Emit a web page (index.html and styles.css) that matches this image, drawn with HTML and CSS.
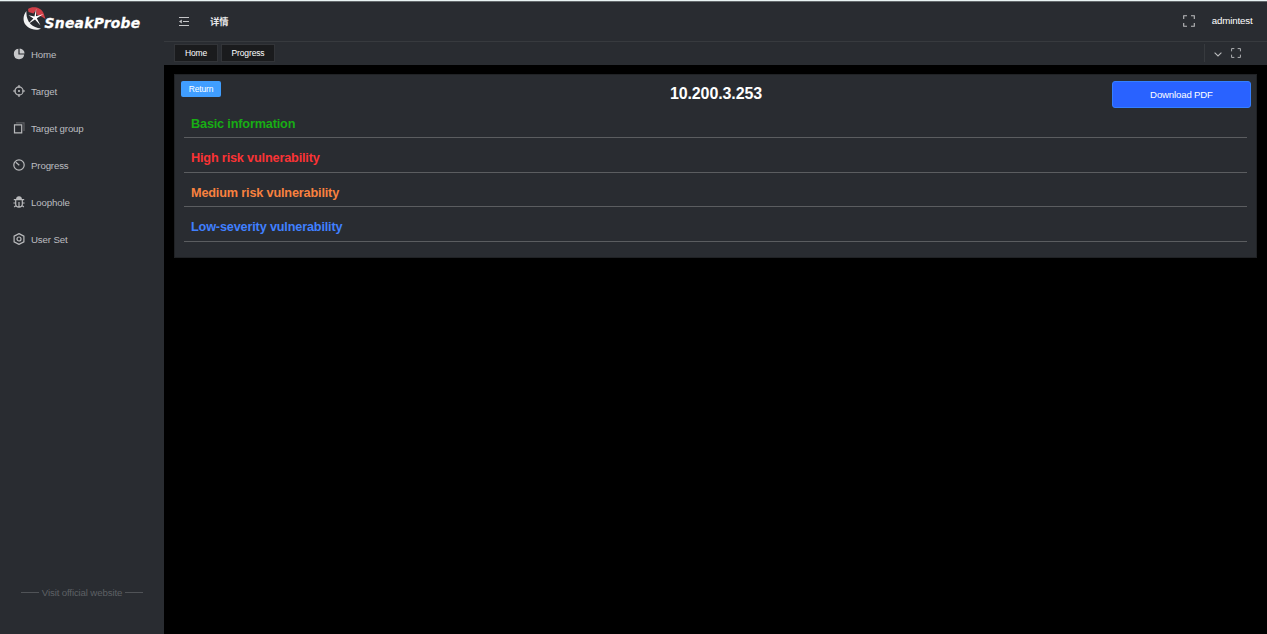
FILE: index.html
```html
<!DOCTYPE html>
<html lang="en">
<head>
<meta charset="utf-8">
<title>SneakProbe</title>
<link rel="stylesheet" href="styles.css">
</head>
<body>
<div class="app">
  <aside class="sidebar">
    <div class="logo">
      <svg width="120" height="26" viewBox="0 0 120 26">
        <path d="M5 3C9 -.2 18 .8 20.5 7L22.5 13L18.5 10.5L13.5 8.5L13 4L10.5 7.5L5.5 6Z" fill="#cf3f48"/>
        <path d="M3.5 5C-1.5 11 -.5 20 9 23C12 24.2 16 24 18 22.4C9 22 2.5 15 3.5 5Z" fill="#f2f3f3"/>
        <path d="M13.2 2.5L13 10.2L20.5 8L13.8 12.2L17.5 19.5L12 13.6L4.5 18.5L10.4 12.4L5.5 9.2L11.4 10.4Z" fill="#fff"/>
        <text class="wordmark" x="21.5" y="21.5" textLength="96" lengthAdjust="spacingAndGlyphs">SneakProbe</text>
      </svg>
    </div>
    <nav class="menu">
      <a class="item"><svg class="icon" viewBox="0 0 12 12"><path d="M5.4 .8A5.2 5.2 0 1 0 11.2 6.6H5.4Z" fill="#c7c8ca"/><path d="M6.6.4A5.2 5.2 0 0 1 11.6 5.4H6.6Z" fill="#c7c8ca"/></svg><span>Home</span></a>
      <a class="item"><svg class="icon line" viewBox="0 0 12 12"><circle cx="6" cy="6" r="4.1"/><path d="M6 0V3M6 9V12M0 6H3M9 6H12"/><circle cx="6" cy="6" r=".5"/></svg><span>Target</span></a>
      <a class="item"><svg class="icon line" viewBox="0 0 12 12"><path d="M3 .8H11V9" opacity=".35"/><path d="M1.5 2.8H8.7V10.9H1.5Z"/></svg><span>Target group</span></a>
      <a class="item"><svg class="icon line" viewBox="0 0 12 12"><circle cx="6" cy="6" r="5.2"/><path d="M2.8 3.2L6.3 6.2"/></svg><span>Progress</span></a>
      <a class="item"><svg class="icon line" viewBox="0 0 12 12"><path d="M3.7 3.2C3.7 0 8.3 0 8.3 3.2Z" fill="#b9babc"/><path d="M.8 3.7H11.2M2.7 4V8.6C2.7 12 9.3 12 9.3 8.6V4M6 6V11M.4 7H2.7M9.3 7H11.6M1.2 11L3.2 9.3M10.8 11L8.8 9.3"/></svg><span>Loophole</span></a>
      <a class="item"><svg class="icon line" viewBox="0 0 12 12"><path d="M6 .6L10.9 3.2V8.8L6 11.4L1.1 8.8V3.2Z"/><circle cx="6" cy="6" r="2"/></svg><span>User Set</span></a>
    </nav>
    <div class="visit"><span class="dash"></span>Visit official website<span class="dash"></span></div>
  </aside>
  <div class="main">
    <header class="topbar">
      <svg class="fold" width="10" height="9" viewBox="0 0 10 9"><path d="M0 .5H10M4 4.5H10M0 8.5H10" stroke="#c5c6c8"/><path d="M2.8 2.5V6.5L0 4.5Z" fill="#c5c6c8"/></svg>
      <span class="crumb">详情</span>
      <svg class="full" width="12" height="12" viewBox="0 0 12 12"><path d="M.7 4V.7H4M8 .7H11.3V4M11.3 8V11.3H8M4 11.3H.7V8"/></svg>
      <span class="user">admintest</span>
    </header>
    <div class="tabs">
      <a class="tab home">Home</a>
      <a class="tab progress">Progress</a>
      <div class="tools">
        <svg class="chevron" width="8" height="5" viewBox="0 0 8 5"><path d="M.6.7L4 4L7.4.7"/></svg>
        <svg class="expand" width="10" height="10" viewBox="0 0 12 12"><path d="M.7 4V.7H4M8 .7H11.3V4M11.3 8V11.3H8M4 11.3H.7V8"/></svg>
      </div>
    </div>
    <main class="panel">
      <div class="head">
        <button class="return">Return</button>
        <h1>10.200.3.253</h1>
        <button class="download">Download PDF</button>
      </div>
      <h2 class="basic">Basic information</h2>
      <h2 class="high">High risk vulnerability</h2>
      <h2 class="medium">Medium risk vulnerability</h2>
      <h2 class="low">Low-severity vulnerability</h2>
    </main>
  </div>
</div>
</body>
</html>
```
FILE: styles.css
```css
* { box-sizing: border-box; }
body { margin: 0; background: #000; font-family: "Liberation Sans", "Noto Sans CJK SC", sans-serif; font-size: 9.7px; letter-spacing: -.15px; overflow: hidden; }
.app { display: flex; height: 634px; border-top: 1px solid #e9f3f3; }
.sidebar { width: 164px; background: #292c31; display: flex; flex-direction: column; border-top: 1px solid #64696c; }
.logo { height: 33px; padding: 4px 0 0 23px; }
.logo svg { display: block; }
.wordmark { font: italic bold 13.5px "DejaVu Sans", sans-serif; letter-spacing: .3px; fill: #fff; stroke: #fff; stroke-width: .3px; }
.menu { display: flex; flex-direction: column; }
.item { display: flex; align-items: center; height: 37px; padding-left: 13px; gap: 6px; color: #bcbdc0; }
.item span { padding-top: 1px; }
.icon { width: 12px; height: 12px; }
.line { fill: none; stroke: #b9babc; stroke-width: 1.2; }
.visit { display: flex; align-items: center; justify-content: center; gap: 3px; margin-top: auto; padding-bottom: 36px; color: #5d6064; }
.dash { width: 18px; height: 1px; background: #505357; }
.main { flex: 1; display: flex; flex-direction: column; }
.topbar { height: 41px; display: flex; align-items: center; padding: 0 15px 2px 15px; background: #292c31; border-top: 1px solid #64696c; border-bottom: 1px solid #373a3e; color: #fff; }
.fold { margin-top: 1px; }
.crumb { margin-left: 21px; font-size: 9.33px; letter-spacing: 0; font-weight: bold; color: #e8e8e9; }
.full { margin-left: auto; }
.full, .expand, .chevron { fill: none; stroke: #babbbd; stroke-width: 1.1; }
.user { margin-left: 17px; margin-right: -.5px; padding-bottom: 1px; }
.tabs { display: flex; height: 23px; padding: 2px 0 3px 10px; gap: 3px; background: #292c31; color: #fff; font-size: 8.5px; }
.tab { display: flex; align-items: center; justify-content: center; height: 18px; padding-bottom: 1px; border: 1px solid #323438; background: #1a1b1d; }
.home { width: 44px; }
.progress { width: 54px; }
.tools { display: flex; align-items: center; gap: 9px; width: 63px; margin-left: auto; padding-left: 9px; border-left: 1px solid #373a3e; }
.chevron { margin-top: 3px; }
.panel { height: 184px; margin: 9px 10px 0; padding: 7px 10px 0; background: #292c31; border: 1px solid #202225; }
.head { display: flex; align-items: flex-start; justify-content: space-between; height: 31px; margin: -1px -4px 0; }
button { font-family: inherit; letter-spacing: inherit; color: #fff; padding: 0; }
.return { width: 40px; height: 16px; margin-right: 99px; border: 0; border-radius: 2px; background: #409eff; font-size: 8.5px; }
h1 { margin: 3px 0 0; font-size: 16px; letter-spacing: -.1px; line-height: 20px; color: #fff; }
.download { width: 139px; height: 27px; margin-right: -1px; border: 1px solid #347fff; border-radius: 3px; background: #2962ff; font-size: 9.6px; }
h2 { height: 34.67px; margin: 0 -1px; padding: 3px 7px 0; font-size: 12.7px; letter-spacing: -.17px; line-height: 18px; border-bottom: 1px solid #5b5d60; }
.basic { height: 26px; color: #18ad14; }
.high { color: #fa3335; padding-top: 11px; }
.medium { color: #f8813f; padding-top: 11px; }
.low { color: #4080ff; padding-top: 11px; }
```
